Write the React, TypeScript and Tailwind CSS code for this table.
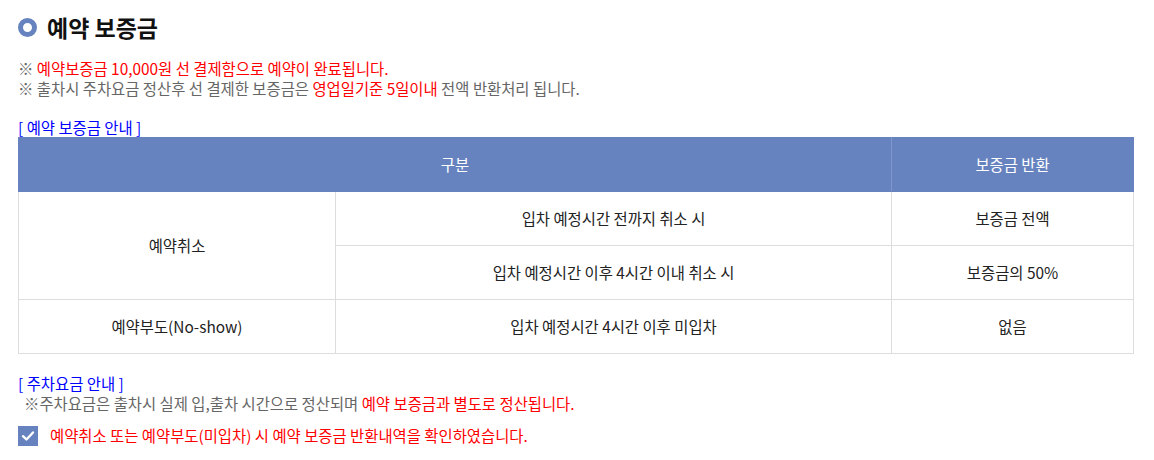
import React from "react";

export default function App() {
  const font = { fontFamily: '"Noto Sans CJK KR", "Noto Sans", sans-serif' };
  return (
    <div className="bg-white w-[1154px] h-[460px] pl-[18px] pr-[20px] pt-[13px] text-[#222]" style={font}>
      <div className="flex items-center h-[28px]">
        <span className="w-[19px] h-[19px] rounded-full border-[5px] border-[#6683bf] box-border" />
        <h2 className="ml-[10px] text-[23px] font-bold text-[#111] leading-[28px]">예약 보증금</h2>
      </div>
      <div className="mt-[17px] text-[15.4px] leading-[20px] text-[#666]">
        <p>※ <span className="text-[#ff0000]">예약보증금 10,000원 선 결제함으로 예약이 완료됩니다.</span></p>
        <p>※ 출차시 주차요금 정산후 선 결제한 보증금은 <span className="text-[#ff0000]">영업일기준 5일이내</span> 전액 반환처리 됩니다.</p>
      </div>
      <p className="mt-[19px] text-[15.4px] leading-[20px] text-[#0000ff]">[ 예약 보증금 안내 ]</p>
      <table className="w-[1116px] table-fixed border-collapse text-[15.4px] text-center">
        <colgroup>
          <col className="w-[317px]" />
          <col className="w-[556px]" />
          <col />
        </colgroup>
        <thead>
          <tr className="h-[54px] bg-[#6683bf] text-white">
            <th colSpan={2} className="font-normal border border-[#6683bf] border-r-[#8097cb]">구분</th>
            <th className="font-normal border border-[#6683bf] border-l-[#8097cb]">보증금 반환</th>
          </tr>
        </thead>
        <tbody>
          <tr className="h-[54px]">
            <td rowSpan={2} className="border border-[#dddddd]">예약취소</td>
            <td className="border border-[#dddddd]">입차 예정시간 전까지 취소 시</td>
            <td className="border border-[#dddddd]">보증금 전액</td>
          </tr>
          <tr className="h-[54px]">
            <td className="border border-[#dddddd]">입차 예정시간 이후 4시간 이내 취소 시</td>
            <td className="border border-[#dddddd]">보증금의 50%</td>
          </tr>
          <tr className="h-[54px]">
            <td className="border border-[#dddddd]">예약부도(No-show)</td>
            <td className="border border-[#dddddd]">입차 예정시간 4시간 이후 미입차</td>
            <td className="border border-[#dddddd]">없음</td>
          </tr>
        </tbody>
      </table>
      <p className="mt-[19px] text-[15.4px] leading-[20px] text-[#0000ff]">[ 주차요금 안내 ]</p>
      <p className="pl-[6px] text-[15.4px] leading-[20px] text-[#666]">
        ※주차요금은 출차시 실제 입,출차 시간으로 정산되며 <span className="text-[#ff0000]">예약 보증금과 별도로 정산됩니다.</span>
      </p>
      <label className="mt-[13px] flex items-center h-[20px]">
        <span className="w-[20px] h-[20px] bg-[#6683bf] flex items-center justify-center">
          <svg width="14" height="14" viewBox="0 0 14 14">
            <path d="M2 7.2 L5.5 10.5 L12 3.5" fill="none" stroke="white" strokeWidth="2.4" strokeLinecap="round" strokeLinejoin="round" />
          </svg>
        </span>
        <span className="ml-[12px] text-[15.4px] text-[#ff0000]">예약취소 또는 예약부도(미입차) 시 예약 보증금 반환내역을 확인하였습니다.</span>
      </label>
    </div>
  );
}
